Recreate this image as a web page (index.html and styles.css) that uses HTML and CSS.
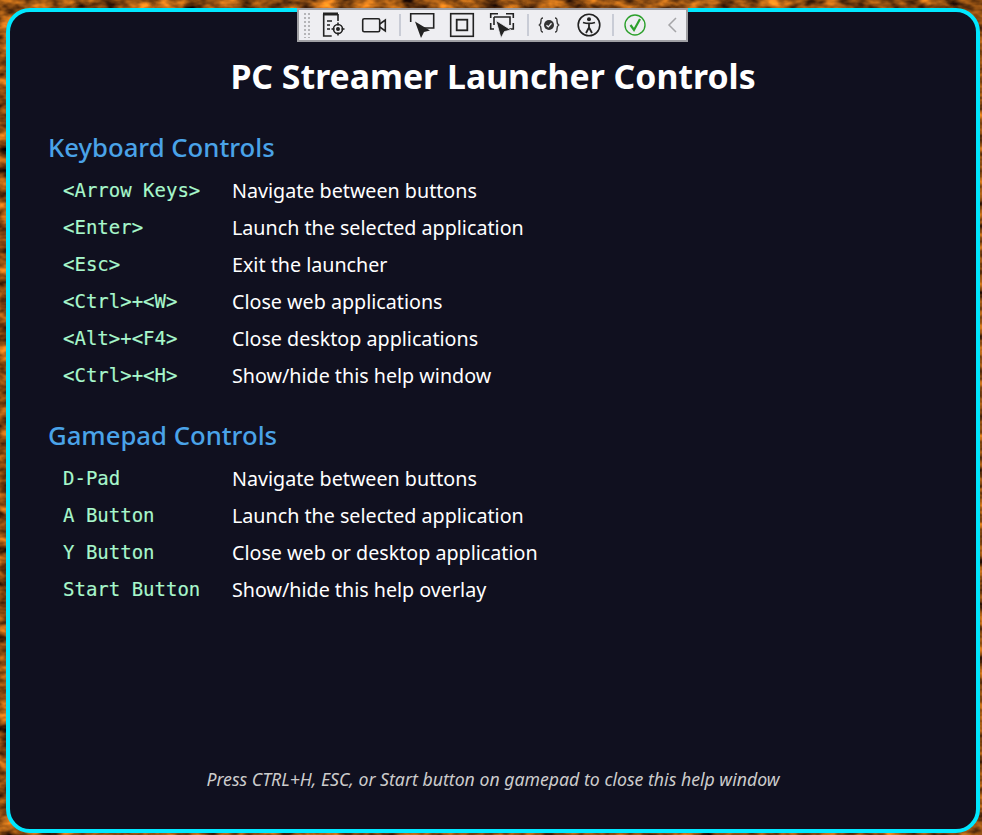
FILE: index.html
```html
<!DOCTYPE html>
<html lang="en">
<head>
  <meta charset="UTF-8">
  <title>PC Streamer Launcher Controls</title>
  <link rel="stylesheet" href="styles.css">
</head>
<body>
  <svg class="wallpaper" width="982" height="835">
    <filter id="mottle" x="0" y="0" width="100%" height="100%" color-interpolation-filters="sRGB">
      <feTurbulence type="fractalNoise" baseFrequency="0.05 0.09" numOctaves="3" seed="7"/>
      <feColorMatrix type="matrix" values="1.5 0 0 0 -0.2  0.9 0 0 0 -0.15  0.2 0 0 0 -0.03  0 0 0 0 1"/>
    </filter>
    <rect width="982" height="835" filter="url(#mottle)"/>
  </svg>

  <div class="toolbar">
    <span class="grip"></span>
    <svg class="tool" width="26" height="26" viewBox="0 0 26 26" fill="none" stroke="#222" stroke-width="1.6">
      <path d="M2 2h15" stroke-width="3"/>
      <path d="M2.700 2v22h8M17 2v7M6 9h5M6 13h3M6 17h3"/>
      <circle cx="17" cy="17" r="4.500"/>
      <circle cx="17" cy="17" r="1.200" fill="#222"/>
      <path d="M17 10.500v3M17 20.500v3M10.500 17h3M20.500 17h3"/>
    </svg>
    <svg class="tool" width="26" height="26" viewBox="0 0 26 26" fill="none" stroke="#222" stroke-width="1.6">
      <rect x="1.700" y="6.700" width="17" height="13" rx="1.500"/>
      <path d="M18.700 12l5.600-4v11l-5.600-4"/>
    </svg>
    <span class="sep"></span>
    <svg class="tool" width="26" height="26" viewBox="0 0 26 26" fill="none" stroke="#222" stroke-width="1.6">
      <path d="M1.700 10V1.700h23V16H13"/>
      <path d="M6 9.500l15 9-6 1.500-3 6z" fill="#222" stroke="none"/>
    </svg>
    <svg class="tool" width="26" height="26" viewBox="0 0 26 26" fill="none" stroke="#222" stroke-width="1.6">
      <rect x="1.700" y="1.700" width="22.600" height="22.600"/>
      <rect x="7.700" y="7.700" width="10.600" height="10.600" stroke-width="1.800"/>
    </svg>
    <svg class="tool" width="26" height="26" viewBox="0 0 26 26" fill="none" stroke="#222" stroke-width="1.6">
      <path d="M1.700 6V1.700H9M17 1.700h7.300V6M24.300 11v6H20M1.700 11v6H5M5 5h16v8M5 5v8"/>
      <path d="M7 8.500l15 9.500-6.500 1.500-3.500 6.500z" fill="#222" stroke="#eeeef2" stroke-width=".8"/>
    </svg>
    <span class="sep sep-b"></span>
    <svg class="tool" width="26" height="26" viewBox="0 0 26 26" fill="none" stroke="#333" stroke-width="1.4">
      <path d="M7 6c-2 0-2 1-2 3s0 3-1.600 4C5 14 5 15 5 17s0 3 2 3M19 6c2 0 2 1 2 3s0 3 1.600 4C21 14 21 15 21 17s0 3-2 3"/>
      <circle cx="13" cy="13" r="5" fill="#333" stroke="none"/>
      <path d="M10.500 13.200l1.800 1.700 3.200-3.600" stroke="#eeeef2" stroke-width="1.300"/>
    </svg>
    <svg class="tool" width="26" height="26" viewBox="0 0 26 26" fill="none" stroke="#222" stroke-width="1.600">
      <circle cx="13" cy="13" r="10.800"/>
      <circle cx="13" cy="7.300" r="2" fill="#222" stroke="none"/>
      <path d="M7 10.500c4 1.200 8 1.200 12 0M13 11.500v4.500M13 15.500l-3 5.500M13 15.500l3 5.500" stroke-width="1.800"/>
    </svg>
    <span class="sep sep-c"></span>
    <svg class="tool" width="26" height="26" viewBox="0 0 26 26" fill="none" stroke="#2ca02c">
      <circle cx="13" cy="13" r="10" stroke-width="1.400"/>
      <path d="M8.500 13l3.500 5 6-11" stroke-width="2.200"/>
    </svg>
    <svg class="back" width="14" height="26" viewBox="0 0 14 26" fill="none" stroke="#a5a5a8" stroke-width="1.500">
      <path d="M11 6l-7 7 7 7"/>
    </svg>
  </div>

  <div class="help">
    <h1>PC Streamer Launcher Controls</h1>

    <h2>Keyboard Controls</h2>
    <div class="rows">
      <code>&lt;Arrow Keys&gt;</code><span>Navigate between buttons</span>
      <code>&lt;Enter&gt;</code><span>Launch the selected application</span>
      <code>&lt;Esc&gt;</code><span>Exit the launcher</span>
      <code>&lt;Ctrl&gt;+&lt;W&gt;</code><span>Close web applications</span>
      <code>&lt;Alt&gt;+&lt;F4&gt;</code><span>Close desktop applications</span>
      <code>&lt;Ctrl&gt;+&lt;H&gt;</code><span>Show/hide this help window</span>
    </div>

    <h2>Gamepad Controls</h2>
    <div class="rows">
      <code>D-Pad</code><span>Navigate between buttons</span>
      <code>A Button</code><span>Launch the selected application</span>
      <code>Y Button</code><span>Close web or desktop application</span>
      <code>Start Button</code><span>Show/hide this help overlay</span>
    </div>

    <p class="footer">Press CTRL+H, ESC, or Start button on gamepad to close this help window</p>
  </div>
</body>
</html>
```

FILE: styles.css
```css
html, body {
  height: 100%;
}

body {
  margin: 0;
  box-sizing: border-box;
  padding: 8px 2px 2px 6px;
  overflow: hidden;
  font-family: "Noto Sans", "Open Sans", sans-serif;
  background: #7a4010;
}

.wallpaper {
  position: absolute;
  left: 0;
  top: 0;
}

.help {
  position: relative;
  box-sizing: border-box;
  height: 100%;
  display: flex;
  flex-direction: column;
  padding: 0 38px;
  background: #10101f;
  border: 4px solid #00e8ff;
  border-radius: 24px;
  color: #fff;
}

h1 {
  margin: 39px 0 0;
  font-size: 33.8px;
  line-height: 50px;
  font-weight: 700;
  text-align: center;
}

h2 {
  margin: 24px 0 0;
  font-size: 25.700px;
  line-height: 36px;
  font-weight: 500;
  color: #4aa3e8;
}

h1 + h2 {
  margin-top: 29px;
}

.rows {
  display: grid;
  grid-template-columns: 169px 1fr;
  grid-auto-rows: 37px;
  align-items: center;
  margin-top: 6px;
  padding-left: 15px;
  font-size: 19.700px;
}

.rows code {
  margin-bottom: 2px;
  font-family: "DejaVu Sans Mono", "Liberation Mono", monospace;
  font-size: 19px;
  color: #a8f7cc;
  -webkit-text-stroke: 0.15px #a8f7cc;
}

.footer {
  margin: auto 0 38px;
  text-align: center;
  font-size: 17.700px;
  line-height: 24px;
  font-style: italic;
  color: #ccc;
}

.toolbar {
  position: absolute;
  z-index: 1;
  left: 297px;
  top: 8px;
  width: 391px;
  height: 34px;
  box-sizing: border-box;
  display: flex;
  align-items: center;
  padding-left: 4px;
  background: #eeeef2;
  border: 2px solid #a0a0a4;
}

.grip {
  width: 8px;
  height: 26px;
  margin-right: 3px;
  background-image: radial-gradient(#b5b5b8 1px, transparent 1px);
  background-size: 4px 4px;
}

.tool {
  margin: 0 7px;
  flex: none;
}

.sep {
  flex: none;
  width: 2px;
  height: 22px;
  margin: 0 1px 0 5px;
  background: #c9ccd6;
}

.sep-b {
  margin-right: 0;
}

.sep-c {
  margin-left: 3px;
}

.back {
  flex: none;
  margin-left: 10px;
}
```
